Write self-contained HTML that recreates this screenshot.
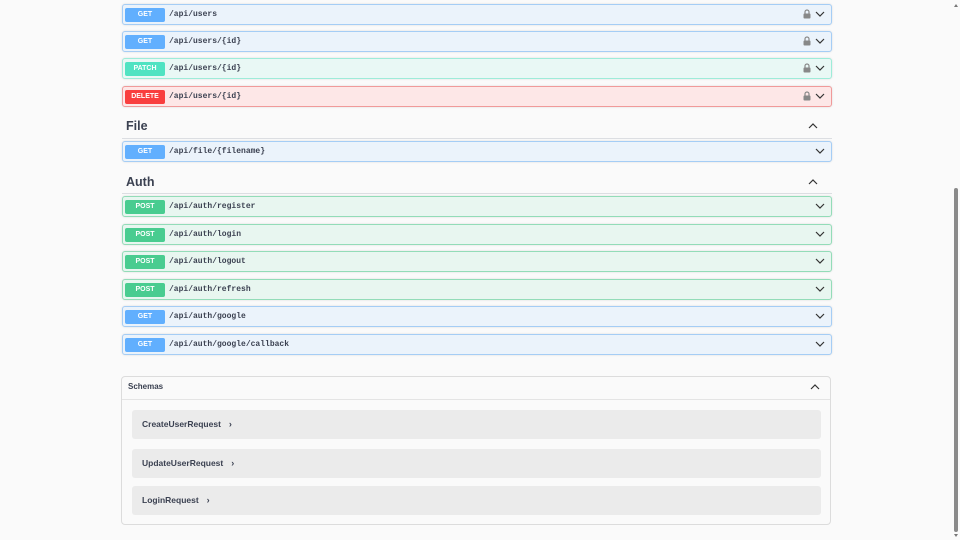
<!DOCTYPE html>
<html><head><meta charset="utf-8"><style>
*{margin:0;padding:0;box-sizing:border-box}
body{width:960px;height:540px;background:#fafafa;position:relative;overflow:hidden;font-family:"Liberation Sans",sans-serif;color:#3b4151}
.op{position:absolute;left:122px;width:710px;height:21px;border:1px solid;border-radius:3px;box-shadow:0 0 2px rgba(0,0,0,.12)}
.b{position:absolute;left:2px;top:2.5px;width:40px;height:14px;border-radius:2px;color:#fff;font-weight:bold;font-size:7px;text-align:center;line-height:14px}
.p{position:absolute;left:46px;top:0;line-height:20px;font-family:"Liberation Mono",monospace;font-weight:bold;font-size:8px;color:#3b4151}
.get{background:#ebf3fb;border-color:#a5cdf5}.get .b{background:#61affe}
.post{background:#e8f6f0;border-color:#93dcb8}.post .b{background:#49cc90}
.patch{background:#e9f8f5;border-color:#9eecd9}.patch .b{background:#50e3c2}
.del{background:#fde7e7;border-color:#f09a9a}.del .b{background:#f93e3e}
.chev{position:absolute;right:6px;top:6px}
.lock{position:absolute;right:20px;top:4px}
.h{position:absolute;left:126px;font-size:12.5px;font-weight:bold;color:#3b4151}
.hl{position:absolute;left:122px;width:710px;height:1px;background:#dcdee2}
.up{position:absolute;left:808px}
.sch{position:absolute;left:121px;top:376px;width:710px;height:149px;border:1px solid #dcdcdc;border-radius:4px;background:#fafafa}
.sch .t{position:absolute;left:6px;top:5px;font-size:8px;font-weight:bold;color:#3b4151}
.sch .line{position:absolute;left:0;top:22px;width:100%;height:1px;background:#e4e4e4}
.m{position:absolute;left:10px;width:689px;height:29px;background:#ebebeb;border-radius:3px;font-size:8.5px;font-weight:bold;color:#3b4151;padding-left:10px;line-height:29px}
.m span{margin-left:8px;font-size:9px}
</style></head><body>
<svg width="0" height="0" style="position:absolute"><defs>
<symbol id="c" viewBox="0 0 10 6"><path d="M1 1l4 4 4-4" fill="none" stroke="#333" stroke-width="1.2"/></symbol>
<symbol id="l" viewBox="0 0 8 10"><path d="M2 4.5V3a2 2 0 0 1 4 0v1.5" fill="none" stroke="#888" stroke-width="1.2"/><rect x="0.5" y="4.5" width="7" height="5" rx="1" fill="#888"/></symbol>
</defs></svg>

<div class="op get" style="top:4px"><div class="b">GET</div><div class="p">/api/users</div><svg class="lock" width="8" height="10"><use href="#l"/></svg><svg class="chev" width="10" height="6"><use href="#c"/></svg></div>
<div class="op get" style="top:31px"><div class="b">GET</div><div class="p">/api/users/{id}</div><svg class="lock" width="8" height="10"><use href="#l"/></svg><svg class="chev" width="10" height="6"><use href="#c"/></svg></div>
<div class="op patch" style="top:58px"><div class="b">PATCH</div><div class="p">/api/users/{id}</div><svg class="lock" width="8" height="10"><use href="#l"/></svg><svg class="chev" width="10" height="6"><use href="#c"/></svg></div>
<div class="op del" style="top:86px"><div class="b">DELETE</div><div class="p">/api/users/{id}</div><svg class="lock" width="8" height="10"><use href="#l"/></svg><svg class="chev" width="10" height="6"><use href="#c"/></svg></div>

<div class="h" style="top:119px">File</div>
<svg class="up" style="top:123px" width="10" height="6"><path d="M1 5l4-4 4 4" fill="none" stroke="#333" stroke-width="1.2"/></svg>
<div class="hl" style="top:138px"></div>
<div class="op get" style="top:141px"><div class="b">GET</div><div class="p">/api/file/{filename}</div><svg class="chev" width="10" height="6"><use href="#c"/></svg></div>

<div class="h" style="top:175px">Auth</div>
<svg class="up" style="top:179px" width="10" height="6"><path d="M1 5l4-4 4 4" fill="none" stroke="#333" stroke-width="1.2"/></svg>
<div class="hl" style="top:193px"></div>
<div class="op post" style="top:196px"><div class="b">POST</div><div class="p">/api/auth/register</div><svg class="chev" width="10" height="6"><use href="#c"/></svg></div>
<div class="op post" style="top:224px"><div class="b">POST</div><div class="p">/api/auth/login</div><svg class="chev" width="10" height="6"><use href="#c"/></svg></div>
<div class="op post" style="top:251px"><div class="b">POST</div><div class="p">/api/auth/logout</div><svg class="chev" width="10" height="6"><use href="#c"/></svg></div>
<div class="op post" style="top:279px"><div class="b">POST</div><div class="p">/api/auth/refresh</div><svg class="chev" width="10" height="6"><use href="#c"/></svg></div>
<div class="op get" style="top:306px"><div class="b">GET</div><div class="p">/api/auth/google</div><svg class="chev" width="10" height="6"><use href="#c"/></svg></div>
<div class="op get" style="top:334px"><div class="b">GET</div><div class="p">/api/auth/google/callback</div><svg class="chev" width="10" height="6"><use href="#c"/></svg></div>

<div class="sch"><div class="t">Schemas</div>
<svg style="position:absolute;right:10px;top:7px" width="10" height="6"><path d="M1 5l4-4 4 4" fill="none" stroke="#333" stroke-width="1.2"/></svg>
<div class="line"></div>
<div class="m" style="top:33px">CreateUserRequest<span>›</span></div>
<div class="m" style="top:72px">UpdateUserRequest<span>›</span></div>
<div class="m" style="top:109px">LoginRequest<span>›</span></div>
</div>

<div style="position:absolute;left:954px;top:4px;width:0;height:0;border-left:2.5px solid transparent;border-right:2.5px solid transparent;border-bottom:3px solid #777"></div>
<div style="position:absolute;left:954px;top:188px;width:4px;height:344px;background:#8a8a8a;border-radius:2px"></div>
<div style="position:absolute;left:954px;top:534px;width:0;height:0;border-left:2.5px solid transparent;border-right:2.5px solid transparent;border-top:3px solid #777"></div>
</body></html>
